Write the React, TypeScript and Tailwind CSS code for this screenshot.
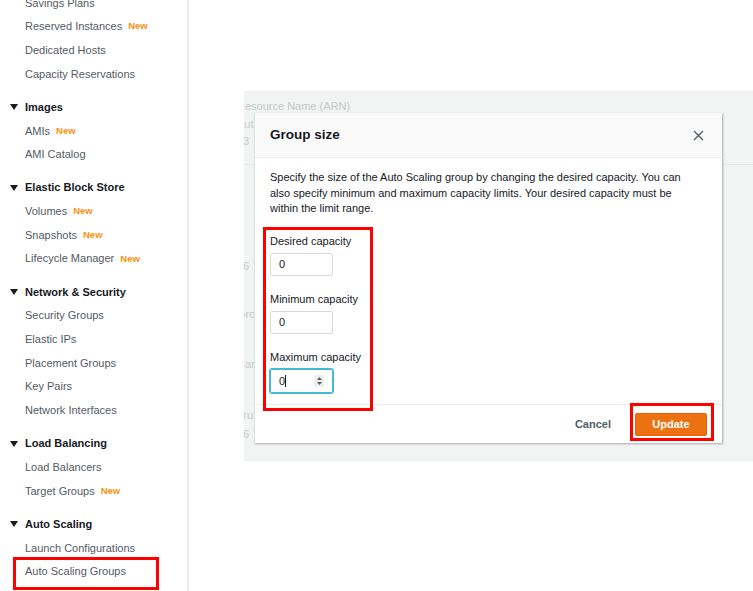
import React from "react";

type NavItem = { label: string; isNew?: boolean; marked?: boolean };
type Section = { title?: string; items: NavItem[] };

const SECTIONS: Section[] = [
  {
    items: [
      { label: "Savings Plans" },
      { label: "Reserved Instances", isNew: true },
      { label: "Dedicated Hosts" },
      { label: "Capacity Reservations" },
    ],
  },
  {
    title: "Images",
    items: [{ label: "AMIs", isNew: true }, { label: "AMI Catalog" }],
  },
  {
    title: "Elastic Block Store",
    items: [
      { label: "Volumes", isNew: true },
      { label: "Snapshots", isNew: true },
      { label: "Lifecycle Manager", isNew: true },
    ],
  },
  {
    title: "Network & Security",
    items: [
      { label: "Security Groups" },
      { label: "Elastic IPs" },
      { label: "Placement Groups" },
      { label: "Key Pairs" },
      { label: "Network Interfaces" },
    ],
  },
  {
    title: "Load Balancing",
    items: [{ label: "Load Balancers" }, { label: "Target Groups", isNew: true }],
  },
  {
    title: "Auto Scaling",
    items: [
      { label: "Launch Configurations" },
      { label: "Auto Scaling Groups", marked: true },
    ],
  },
];

export default function App() {
  return (
    <div className="w-[753px] h-[591px] bg-white flex overflow-hidden font-['Liberation_Sans',Arial,sans-serif]">
      {/* Sidebar */}
      <aside className="w-[189px] shrink-0 h-full border-r-2 border-[#eaeded] overflow-hidden">
        <div className="-mt-[9px]">
          {SECTIONS.map((section, i) => (
            <div key={i}>
              {section.title && (
                <div className="mt-[9.5px] h-[23.7px] flex items-center">
                  <svg width="8" height="6" viewBox="0 0 8 6" className="ml-[10px] mr-[7px]">
                    <path d="M0 0 L8 0 L4 6 Z" fill="#16191f" />
                  </svg>
                  <span className="text-[11px] font-bold text-[#16191f]">{section.title}</span>
                </div>
              )}
              {section.items.map((item) => (
                <div key={item.label} className="relative h-[23.7px] flex items-center pl-[25px]">
                  <span className="text-[11px] text-[#545b64] whitespace-nowrap">{item.label}</span>
                  {item.isNew && (
                    <span className="ml-[6px] text-[9.5px] font-bold text-[#f8920f]">New</span>
                  )}
                  {item.marked && (
                    <div className="absolute left-[13px] top-[-3px] w-[146px] h-[33px] border-[3px] border-[#f00]" />
                  )}
                </div>
              ))}
            </div>
          ))}
        </div>
      </aside>

      {/* Main */}
      <main className="flex-1 min-w-0">
        <div className="ml-[55px] mt-[91px] h-[370px] bg-[#f2f3f3] relative overflow-hidden">
          {/* page content behind the dialog */}
          <div className="pt-[8px] -ml-[7px] text-[11px] leading-[14px] text-[#c6caca] whitespace-nowrap">
            <div>Resource Name (ARN)</div>
            <div className="mt-[4px]">Aut</div>
            <div className="mt-[3px]">13</div>
            <div className="mt-[16px] ml-[7px] border-t border-[#e4e7e7]" />
            <div className="mt-[94px]">86</div>
            <div className="mt-[33.7px]">Gro</div>
            <div className="mt-[36.3px]">Can</div>
            <div className="mt-[37px]">Tru</div>
            <div className="mt-[4.7px]">86</div>
          </div>

          {/* Dialog */}
          <div className="absolute left-[10px] top-[22px] w-[468px] bg-white border-l border-[#e1e4e4] shadow-[1px_1px_2px_rgba(0,0,0,0.3)]">
            <div className="h-[45px] bg-[#fafafa] border-b border-[#eaeded] pl-[15px] pr-[18px] flex items-center justify-between">
              <h2 className="text-[13.5px] font-bold text-[#16191f]">Group size</h2>
              <svg width="11" height="11" viewBox="0 0 11 11">
                <path d="M1 1 L10 10 M10 1 L1 10" stroke="#545b64" strokeWidth="1.4" />
              </svg>
            </div>

            <div className="px-[15px] pt-[12px] pb-[11px]">
              <p className="text-[11px] leading-[15.7px] text-[#16191f] whitespace-nowrap">
                Specify the size of the Auto Scaling group by changing the desired capacity. You can
                <br />
                also specify minimum and maximum capacity limits. Your desired capacity must be
                <br />
                within the limit range.
              </p>

              <div className="mt-[17px] flex flex-col gap-[16px]">
                <Field label="Desired capacity" />
                <Field label="Minimum capacity" />
                <Field label="Maximum capacity" focused />
              </div>
            </div>

            <div className="h-[39px] border-t border-[#eaeded] flex items-center justify-end pr-[15px]">
              <span className="text-[11px] font-bold text-[#545b64] mr-[24px]">Cancel</span>
              <button className="w-[72px] h-[23px] rounded-[2px] bg-[#ec7211] border border-[#eb5f07] text-white text-[11px] font-bold">
                Update
              </button>
            </div>

            {/* annotation boxes */}
            <div className="absolute left-[8px] top-[114px] w-[110px] h-[184px] border-[3px] border-[#f00]" />
            <div className="absolute left-[375px] top-[290px] w-[84px] h-[38px] border-[3px] border-[#f00]" />
          </div>
        </div>
      </main>
    </div>
  );
}

function Field({ label, focused = false }: { label: string; focused?: boolean }) {
  return (
    <div>
      <div className="text-[11px] leading-[14px] text-[#16191f] mb-[5px]">{label}</div>
      <div
        className={
          focused
            ? "w-[63px] h-[24px] rounded-[2px] border border-[#44b9d6] shadow-[0_0_0_1px_#44b9d6] flex items-center pl-[8px] pr-[8px]"
            : "w-[63px] h-[23px] rounded-[2px] border border-[#d5dbdb] flex items-center pl-[8px]"
        }
      >
        <span className="text-[11px] text-[#16191f]">0</span>
        {focused && (
          <>
            <span className="w-px h-[12px] bg-[#16191f]" />
            <span className="ml-auto w-[10px] h-[12px] bg-[#eeeeee] rounded-[1px] flex flex-col items-center justify-center gap-[2px]">
              <svg width="5" height="3" viewBox="0 0 5 3">
                <path d="M0 3 L2.5 0 L5 3 Z" fill="#545b64" />
              </svg>
              <svg width="5" height="3" viewBox="0 0 5 3">
                <path d="M0 0 L5 0 L2.5 3 Z" fill="#545b64" />
              </svg>
            </span>
          </>
        )}
      </div>
    </div>
  );
}
